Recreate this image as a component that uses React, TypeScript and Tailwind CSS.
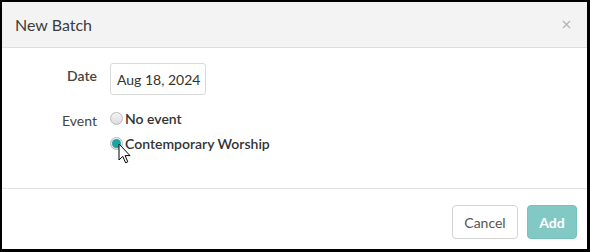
import { X } from "lucide-react";

const Radio = ({ checked }: { checked?: boolean }) => (
  <span className="relative flex h-[13px] w-[13px] shrink-0 items-center justify-center rounded-full border border-[#b9b9b9] bg-gradient-to-b from-[#f4f4f4] to-[#dcdcdc]">
    {checked && <span className="h-[9px] w-[9px] rounded-full bg-[#18a5a3]" />}
  </span>
);

export default function App() {
  return (
    <div className="h-[252px] w-[590px] border-b-[3px] border-l-2 border-r-[3px] border-t-2 border-black bg-white font-['Lato','Liberation_Sans',sans-serif] text-[#333]">
      <div className="flex h-[46px] items-center justify-between border-b border-[#dddddd] bg-[#f3f3f3] pl-[13px] pr-[14px]">
        <span className="text-[16px] text-[#3c3c3c]">New Batch</span>
        <X className="h-[13px] w-[13px] text-[#b0b0b0]" strokeWidth={2} />
      </div>

      <div className="relative h-[140px] pt-[15px]">
        <div className="flex">
          <div className="w-[95px] pt-[2px] text-right text-[14px] font-semibold text-[#444]">Date</div>
          <div className="ml-[13px] flex h-[32px] w-[96px] items-center whitespace-nowrap rounded-[3px] border border-[#d9d9d9] px-[6px] text-[14px] text-[#333]">
            Aug 18, 2024
          </div>
        </div>
        <div className="mt-[14px] flex">
          <div className="w-[95px] pt-[1px] text-right text-[14px] text-[#444]">Event</div>
          <div className="ml-[13px] flex flex-col gap-[8px] pt-[1px]">
            <label className="flex h-[17px] items-center gap-[2px] text-[14px] font-semibold text-[#333]">
              <Radio />
              No event
            </label>
            <label className="flex h-[17px] items-center gap-[2px] text-[14px] font-semibold text-[#333]">
              <Radio checked />
              Contemporary Worship
            </label>
          </div>
        </div>
        <svg className="absolute left-[116px] top-[95px]" width="13" height="21" viewBox="0 0 13 21">
          <path d="M1 1 L1 17 L4.8 13.4 L7.6 19.8 L9.8 18.8 L7.1 12.6 L12 12.6 Z" fill="#fff" stroke="#000" strokeWidth="1" strokeLinejoin="miter" />
        </svg>
      </div>

      <div className="flex justify-end gap-[9px] border-t border-[#e3e3e3] pr-[10px] pt-[16px]">
        <button className="h-[34px] w-[66px] rounded-[4px] border border-[#d4d4d4] bg-white text-[14px] text-[#555]">
          Cancel
        </button>
        <button className="h-[34px] w-[50px] rounded-[4px] border border-[#76c2bd] bg-[#82c9c5] text-[14px] font-bold text-white">
          Add
        </button>
      </div>
    </div>
  );
}
